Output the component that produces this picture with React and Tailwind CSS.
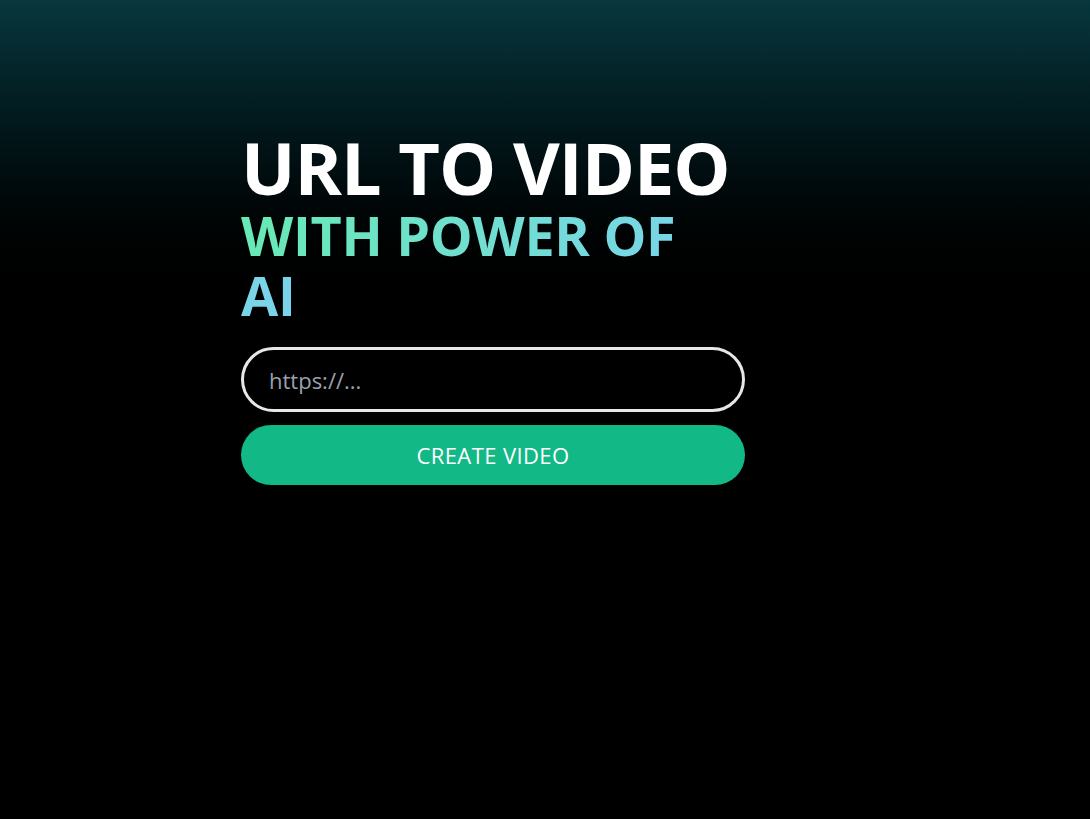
export default function App() {
  return (
    <div className="min-h-screen w-full bg-linear-to-b from-[#08373e] via-black via-40% to-black font-['Open_Sans','Noto_Sans',sans-serif]">
      <div className="pl-[241px] pt-[132px]">
        <div className="w-[504px] flex flex-col">
          <h1 className="text-[72px] leading-[70px] font-bold text-white tracking-[-1px]">URL TO VIDEO</h1>
          <h2 className="mt-[3px] w-[460px] text-[54px] leading-[60px] font-bold tracking-[-0.3px]">
            <span className="bg-linear-to-r from-[#68e9b4] to-[#7ad3ec] bg-clip-text text-transparent">
              WITH POWER OF AI
            </span>
          </h2>
          <input
            type="text"
            placeholder="https://..."
            className="mt-[22px] h-[65px] w-full rounded-full border-[3px] border-gray-200 bg-black px-[25px] text-[22px] text-white placeholder:text-gray-400 outline-none"
          />
          <button className="mt-[13px] h-[60px] w-full rounded-full bg-[#12b886] text-[22px] tracking-[0.4px] text-white uppercase">
            Create Video
          </button>
        </div>
      </div>
    </div>
  );
}
